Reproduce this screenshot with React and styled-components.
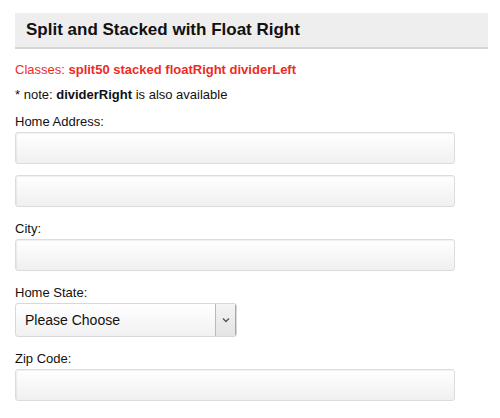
import styled, { createGlobalStyle } from 'styled-components';

const GlobalStyle = createGlobalStyle`
  body {
    margin: 0;
    background: #fff;
    font-family: "Liberation Sans", Arial, sans-serif;
    color: #111;
  }
`;

const Page = styled.div`
  padding: 13px 12px 0 15px;
`;

const Header = styled.div`
  background: #eeeeee;
  border-bottom: 2px solid #d6d6d6;
  height: 34px;
  display: flex;
  align-items: center;
  padding: 0 11px;
  margin-bottom: 13px;
  h2 {
    margin: 0;
    font-size: 17px;
    font-weight: bold;
    color: #111;
  }
`;

const Note = styled.p`
  margin: 0 0 ${p => p.$gap}px;
  font-size: 13px;
  line-height: 15px;
  color: ${p => (p.$red ? '#ee2b25' : '#111')};
  b {
    font-weight: bold;
  }
`;

const Group = styled.div`
  width: 440px;
  margin-bottom: 14px;
`;

const Label = styled.label`
  display: block;
  font-size: 13px;
  line-height: 15px;
  margin-bottom: 3px;
  color: #111;
`;

const Input = styled.input`
  display: block;
  box-sizing: border-box;
  width: 100%;
  height: 32px;
  margin: 0 0 11px;
  border: 1px solid #dcdcdc;
  border-radius: 3px;
  background: linear-gradient(#ffffff, #f0f0f0);
  box-shadow: inset 1px 1px 1px rgba(0, 0, 0, 0.06);
  &:last-child {
    margin-bottom: 0;
  }
`;

const SelectBox = styled.div`
  display: flex;
  box-sizing: border-box;
  width: 222px;
  height: 34px;
  border: 1px solid #d8d8d8;
  border-radius: 3px;
  background: linear-gradient(#ffffff, #f1f1f1);
  overflow: hidden;
`;

const Select = styled.select`
  flex: 1;
  appearance: none;
  border: none;
  background: transparent;
  font-family: "Liberation Sans", Arial, sans-serif;
  font-size: 14px;
  color: #111;
  padding: 0 0 0 9px;
  outline: none;
`;

const Arrow = styled.span`
  width: 19px;
  display: flex;
  align-items: center;
  justify-content: center;
  border-left: 1px solid #b9b9b9;
  border-right: 1px solid #a8a8a8;
  background: linear-gradient(#f4f4f4, #e4e4e4);
`;

const App = () => (
  <Page>
    <GlobalStyle />
    <Header>
      <h2>Split and Stacked with Float Right</h2>
    </Header>
    <Note $red $gap={10}>
      Classes: <b>split50 stacked floatRight dividerLeft</b>
    </Note>
    <Note $gap={12}>
      * note: <b>dividerRight</b> is also available
    </Note>
    <Group>
      <Label>Home Address:</Label>
      <Input type="text" />
      <Input type="text" />
    </Group>
    <Group>
      <Label>City:</Label>
      <Input type="text" />
    </Group>
    <Group>
      <Label>Home State:</Label>
      <SelectBox>
        <Select defaultValue="">
          <option value="">Please Choose</option>
        </Select>
        <Arrow>
          <svg width="8" height="6" viewBox="0 0 8 6">
            <path d="M1 1.5 L4 4.5 L7 1.5" fill="none" stroke="#555" strokeWidth="1.4" />
          </svg>
        </Arrow>
      </SelectBox>
    </Group>
    <Group>
      <Label>Zip Code:</Label>
      <Input type="text" />
    </Group>
  </Page>
);

export default App;
